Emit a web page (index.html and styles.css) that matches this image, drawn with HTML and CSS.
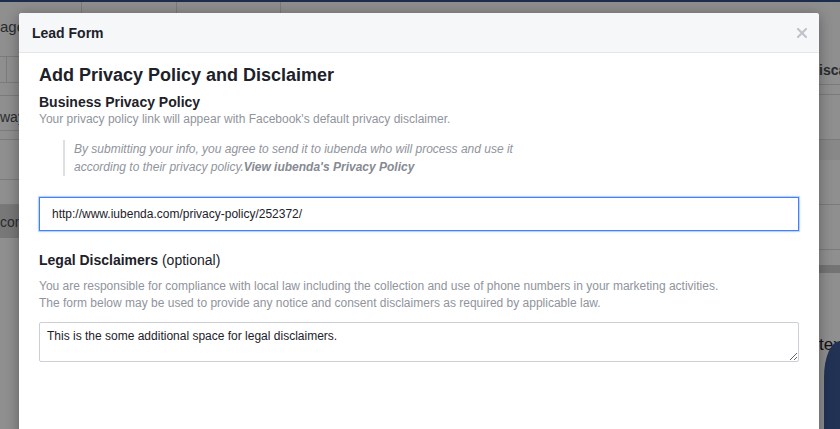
FILE: index.html
```html
<!DOCTYPE html>
<html lang="en">
<head>
<meta charset="utf-8">
<title>Lead Form</title>
<link rel="stylesheet" href="styles.css">
</head>
<body>
<div class="page">
  <div class="navbar"></div>
  <div class="tabs">
    <div class="tab tab-1"><span class="tab-label">age</span></div>
    <div class="tab tab-2"></div>
    <div class="tab tab-3"></div>
    <div class="tab tab-rest"></div>
  </div>
  <div class="content">
    <div class="side side-left">
      <div class="row r-l1"></div>
      <div class="row r-l2"><span class="cell-a"></span><span class="cell-b"></span></div>
      <div class="row r-l3"></div>
      <div class="row r-l4"><span class="side-text">way</span></div>
      <div class="row r-l5"></div>
      <div class="row r-l6"></div>
      <div class="row r-l7"></div>
      <div class="row r-l8 band"><span class="side-text">con</span></div>
    </div>
    <div class="middle"></div>
    <div class="side side-right">
      <div class="row r-r1"><span class="side-bold">isca</span></div>
      <div class="row r-r2"></div>
      <div class="row r-r3"></div>
      <div class="row r-r4 light-band"></div>
      <div class="row r-r5"></div>
      <div class="row r-r6"></div>
      <div class="row r-r7"></div>
      <div class="row r-r8 band"></div>
      <div class="row r-r9"><span class="side-large">tex</span></div>
      <div class="phone"></div>
    </div>
  </div>

  <div class="backdrop"></div>

  <div class="modal">
    <div class="modal-header">
      <span class="modal-title">Lead Form</span>
      <svg class="close" width="10" height="10" viewBox="0 0 10 10" aria-label="Close">
        <path d="M1 1 L9 9 M9 1 L1 9" stroke="#bec2c9" stroke-width="2" stroke-linecap="square"/>
      </svg>
    </div>
    <div class="modal-body">
      <h1 class="heading">Add Privacy Policy and Disclaimer</h1>
      <h2 class="subheading">Business Privacy Policy</h2>
      <p class="help">Your privacy policy link will appear with Facebook's default privacy disclaimer.</p>
      <blockquote class="preview">By submitting your info, you agree to send it to iubenda who will process and use it<br>according to their privacy policy.<b>View iubenda's Privacy Policy</b></blockquote>
      <div class="url-field">
        <input class="url-input" type="text" value="http://www.iubenda.com/privacy-policy/252372/">
      </div>
      <h2 class="subheading legal">Legal Disclaimers <span class="optional">(optional)</span></h2>
      <p class="help desc">You are responsible for compliance with local law including the collection and use of phone numbers in your marketing activities.<br>The form below may be used to provide any notice and consent disclaimers as required by applicable law.</p>
      <textarea class="legal-text">This is the some additional space for legal disclaimers.</textarea>
    </div>
  </div>
</div>
</body>
</html>
```
FILE: styles.css
```css
* { box-sizing: border-box; }

html, body {
  margin: 0;
  padding: 0;
}

body {
  font-family: "Liberation Sans", Arial, Helvetica, sans-serif;
  color: #1d2129;
  background: #fff;
}

.page {
  position: relative;
  width: 840px;
  height: 429px;
  overflow: hidden;
  background: #fff;
}

/* ---------- background page ---------- */
.navbar {
  height: 2px;
  background: #34508a;
}

.tabs {
  display: flex;
  height: 43px;
}

.tab {
  border-right: 1px solid #dcdcdc;
  height: 100%;
}

.tab-1 { width: 82px; padding-top: 16px; }
.tab-2 { width: 95px; }
.tab-3 { width: 104px; }
.tab-rest { flex: 1; border-right: none; }

.tab-label {
  font-size: 15px;
  color: #4b4f56;
}

.content {
  display: grid;
  grid-template-columns: 19px 1fr 21px;
  height: 384px;
}

.side {
  display: flex;
  flex-direction: column;
  white-space: nowrap;
}

.side-right {
  overflow: hidden;
}

.row {
  border-bottom: 1px solid #dcdcdc;
  flex: none;
  display: flex;
  align-items: center;
}

.side-left .row {
  width: 60px;
}

.r-l1 { height: 12px; }
.r-l2 { height: 26px; }
.r-l2 .cell-a { width: 7px; height: 100%; border-right: 1px solid #dcdcdc; }
.r-l3 { height: 13px; }
.r-l4 { height: 35px; padding-top: 8px; }
.r-l5 { height: 9px; }
.r-l6 { height: 40px; }
.r-l7 { height: 25px; }
.r-l8 { height: 33px; border-bottom: none; }

.band { background: #d6d6d6; }
.light-band { background: #f2f2f2; }

.side-text {
  font-size: 14px;
  color: #4b4f56;
}

.side-bold {
  font-size: 14px;
  font-weight: bold;
  color: #4b4f56;
}

.side-large {
  font-size: 17px;
  color: #1d2129;
}

.r-r1 { height: 40px; padding-top: 10px; }
.r-r2 { height: 10px; }
.r-r3 { height: 45px; }
.r-r4 { height: 20px; border-bottom: none; }
.r-r5 { height: 45px; }
.r-r6 { height: 45px; }
.r-r7 { height: 15px; border-bottom: none; }
.r-r8 { height: 8px; border-bottom: none; background: #cfcfcf; }
.r-r9 { height: 90px; border-bottom: none; padding-top: 54px; }

.phone {
  flex: 1;
  margin-left: 5px;
  margin-top: -22px;
  background: #3b5998;
  border-top-left-radius: 40px 90px;
}

.backdrop {
  position: absolute;
  inset: 0;
  background: rgba(0, 0, 0, 0.44);
}

/* ---------- modal ---------- */
.modal {
  position: absolute;
  left: 19px;
  top: 13px;
  width: 800px;
  height: 440px;
  background: #fff;
  border-radius: 3px 3px 0 0;
  box-shadow: 0 2px 14px rgba(0, 0, 0, 0.35);
}

.modal-header {
  height: 40px;
  display: flex;
  align-items: center;
  justify-content: space-between;
  padding: 0 13px;
  background: #f6f7f9;
  border-bottom: 1px solid #e5e5e5;
  border-radius: 3px 3px 0 0;
}

.modal-title {
  font-size: 14px;
  font-weight: bold;
  color: #1d2129;
  line-height: 18px;
}

.close {
  display: block;
  margin-right: -1px;
}

.modal-body {
  padding: 11px 20px 0 20px;
}

.heading {
  margin: 0;
  font-size: 18px;
  line-height: 22px;
  font-weight: bold;
  color: #1d2129;
}

.subheading {
  margin: 7px 0 0 0;
  font-size: 14px;
  line-height: 18px;
  font-weight: bold;
  color: #1d2129;
}

.help {
  margin: 0;
  font-size: 12px;
  line-height: 16px;
  color: #90949c;
}

.preview {
  margin: 13px 0 0 24px;
  padding: 0 0 0 9px;
  border-left: 2px solid #dddfe2;
  font-size: 12px;
  line-height: 18px;
  font-style: italic;
  color: #90949c;
}

.preview b {
  color: #868a92;
}

.url-field {
  margin-top: 21px;
}

.url-input {
  display: block;
  width: 760px;
  height: 34px;
  padding: 0 12px;
  font-family: "Liberation Sans", Arial, Helvetica, sans-serif;
  font-size: 12px;
  color: #1d2129;
  border: 1px solid #4080ff;
  border-radius: 0;
  outline: none;
  box-shadow: 0 0 0 1px rgba(64, 128, 255, 0.25), 0 0 3px rgba(64, 128, 255, 0.35);
  background: #fff;
}

.legal {
  margin-top: 20px;
}

.optional {
  font-weight: normal;
}

.desc {
  margin-top: 9px;
  line-height: 17px;
}

.legal-text {
  display: block;
  width: 760px;
  height: 40px;
  margin-top: 10px;
  padding: 5px 7px;
  font-family: "Liberation Sans", Arial, Helvetica, sans-serif;
  font-size: 12px;
  line-height: 16px;
  color: #1d2129;
  border: 1px solid #ccd0d5;
  border-radius: 2px;
  resize: vertical;
  outline: none;
  background: #fff;
}
```
